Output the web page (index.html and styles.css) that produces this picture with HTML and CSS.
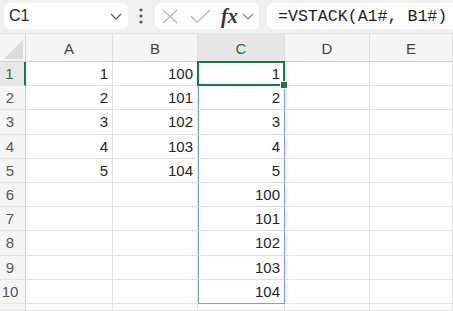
FILE: index.html
```html
<!DOCTYPE html>
<html lang="en">

<head>
  <meta charset="UTF-8">
  <title>VSTACK</title>
  <link rel="stylesheet" href="styles.css">
</head>

<body>
  <header class="toolbar">
    <div class="namebox">
      <span class="namebox__text">C1</span>
      <svg class="chevron" width="12" height="7" viewBox="0 0 12 7">
        <path d="M1 1 L6 6 L11 1" fill="none" stroke="#555" stroke-width="1.2" />
      </svg>
    </div>

    <svg class="more" width="6" height="20" viewBox="0 0 6 20">
      <circle cx="3" cy="4" r="1.6" fill="#555" />
      <circle cx="3" cy="10" r="1.6" fill="#555" />
      <circle cx="3" cy="16" r="1.6" fill="#555" />
    </svg>

    <div class="fxbox">
      <svg class="fxbox__icon" width="16" height="15" viewBox="0 0 16 15">
        <path d="M1 1 L15 14 M15 1 L1 14" fill="none" stroke="#b4b4b4" stroke-width="1.2" />
      </svg>
      <svg class="fxbox__icon fxbox__icon--check" width="21" height="15" viewBox="0 0 21 15">
        <path d="M1 7 L7 13.5 L20 1" fill="none" stroke="#b4b4b4" stroke-width="1.2" />
      </svg>
      <span class="fxbox__fx">fx</span>
      <svg class="chevron" width="12" height="7" viewBox="0 0 12 7">
        <path d="M1 1 L6 6 L11 1" fill="none" stroke="#888" stroke-width="1.1" />
      </svg>
    </div>

    <div class="formula">=VSTACK(A1#, B1#)</div>
  </header>

  <main class="sheet">
    <div class="corner">
      <svg width="19" height="19" viewBox="0 0 19 19">
        <path d="M19 0 L19 19 L0 19 Z" fill="#dcdcdc" />
      </svg>
    </div>
    <div class="colhead">A</div>
    <div class="colhead">B</div>
    <div class="colhead colhead--active">C</div>
    <div class="colhead">D</div>
    <div class="colhead">E</div>

    <div class="rowhead rowhead--active">1</div>
    <div class="cell">1</div><div class="cell">100</div><div class="cell cell--spill cell--active">1</div><div class="cell"></div><div class="cell"></div>

    <div class="rowhead">2</div>
    <div class="cell">2</div><div class="cell">101</div><div class="cell cell--spill">2</div><div class="cell"></div><div class="cell"></div>

    <div class="rowhead">3</div>
    <div class="cell">3</div><div class="cell">102</div><div class="cell cell--spill">3</div><div class="cell"></div><div class="cell"></div>

    <div class="rowhead">4</div>
    <div class="cell">4</div><div class="cell">103</div><div class="cell cell--spill">4</div><div class="cell"></div><div class="cell"></div>

    <div class="rowhead">5</div>
    <div class="cell">5</div><div class="cell">104</div><div class="cell cell--spill">5</div><div class="cell"></div><div class="cell"></div>

    <div class="rowhead">6</div>
    <div class="cell"></div><div class="cell"></div><div class="cell cell--spill">100</div><div class="cell"></div><div class="cell"></div>

    <div class="rowhead">7</div>
    <div class="cell"></div><div class="cell"></div><div class="cell cell--spill">101</div><div class="cell"></div><div class="cell"></div>

    <div class="rowhead">8</div>
    <div class="cell"></div><div class="cell"></div><div class="cell cell--spill">102</div><div class="cell"></div><div class="cell"></div>

    <div class="rowhead">9</div>
    <div class="cell"></div><div class="cell"></div><div class="cell cell--spill">103</div><div class="cell"></div><div class="cell"></div>

    <div class="rowhead">10</div>
    <div class="cell"></div><div class="cell"></div><div class="cell cell--spill cell--spill-end">104</div><div class="cell"></div><div class="cell"></div>

    <div class="rowhead"></div>
    <div class="cell"></div><div class="cell"></div><div class="cell"></div><div class="cell"></div><div class="cell"></div>
  </main>
</body>

</html>
```

FILE: styles.css
```css
html,
body {
  margin: 0;
  height: 100%;
  overflow: hidden;
  background: #fff;
  font-family: 'Liberation Sans', Arial, sans-serif;
}

body {
  display: flex;
  flex-direction: column;
}

.toolbar {
  height: 34px;
  flex: none;
  box-sizing: border-box;
  padding: 3px 0 4px 4px;

  display: flex;
  align-items: stretch;

  background: #f0f0f0;
  border-bottom: 1px solid #e4e4e4;
}

.namebox {
  width: 124px;
  box-sizing: border-box;
  padding: 0 6px 0 5px;

  display: flex;
  align-items: center;
  justify-content: space-between;

  background: #fff;
  border-radius: 6px;
}

.namebox__text {
  font-size: 16px;
  color: #1f1f1f;
}

.more {
  align-self: center;
  margin: 0 11px 0 10px;
}

.fxbox {
  width: 104px;
  box-sizing: border-box;
  padding: 0 4px 0 7px;

  display: flex;
  align-items: center;

  background: #fff;
  border-radius: 6px;
}

.fxbox__icon--check {
  margin-left: 12px;
}

.fxbox__fx {
  margin-left: 10px;
  margin-right: 4px;

  font-family: 'Liberation Serif', 'Times New Roman', serif;
  font-style: italic;
  font-weight: bold;
  font-size: 20px;
  color: #333;
  line-height: 1;
}

.formula {
  flex: 1;
  margin-left: 8px;
  padding-left: 11px;

  display: flex;
  align-items: center;

  background: #fff;
  border-radius: 6px 0 0 6px;

  font-family: 'Liberation Mono', 'DejaVu Sans Mono', monospace;
  font-size: 16.6px;
  color: #1f1f1f;
  white-space: nowrap;
}

.sheet {
  flex: 1;
  min-height: 0;
  overflow: hidden;
  display: grid;
  grid-template-columns: 26px 87px 85px 87px 85px 1fr;
  grid-template-rows: 28px repeat(10, 24.2px) 1fr;

  font-size: 15px;
  color: #1f1f1f;
}

.corner {
  display: flex;
  align-items: flex-end;
  justify-content: flex-end;
  padding: 0 2px 2px 0;

  background: #f5f5f5;
  border-right: 1px solid #d8d8d8;
  border-bottom: 1px solid #d0d0d0;
}

.colhead {
  display: flex;
  align-items: center;
  justify-content: center;
  padding-top: 2px;

  background: #f5f5f5;
  border-right: 1px solid #dedede;
  border-bottom: 1px solid #d0d0d0;
  color: #444;
}

.colhead--active {
  background: #e6e6e6;
  color: #107c41;
}

.rowhead {
  display: flex;
  align-items: center;
  justify-content: center;
  padding-right: 5px;

  background: #f5f5f5;
  border-right: 1px solid #d0d0d0;
  border-bottom: 1px solid #e4e4e4;
  color: #555;
  font-size: 15px;
}

.rowhead--active {
  color: #107c41;
  background: #e8e8e8;
  border-right: 2px solid #107c41;
}

.cell {
  display: flex;
  align-items: center;
  justify-content: flex-end;
  padding-right: 4px;

  border-right: 1px solid #e1e1e1;
  border-bottom: 1px solid #e1e1e1;
  white-space: nowrap;
}

/* spilled range of the VSTACK formula */
.cell--spill {
  border-left: 1px solid #7d9ee0;
  border-right-color: #7d9ee0;
  box-shadow: 3px 0 4px -2px rgba(0, 0, 0, 0.12);
}

.cell--spill-end {
  border-bottom-color: #7d9ee0;
}

.cell--active {
  position: relative;
}

.cell--active::after {
  content: '';
  position: absolute;
  top: -1px;
  left: -2px;
  right: -1px;
  bottom: -1px;

  border: 2px solid #107c41;
}

.cell--active::before {
  content: '';
  position: absolute;
  right: -4px;
  bottom: -4px;
  z-index: 1;
  width: 6px;
  height: 6px;

  background: #107c41;
  border: 1px solid #fff;
}
```
